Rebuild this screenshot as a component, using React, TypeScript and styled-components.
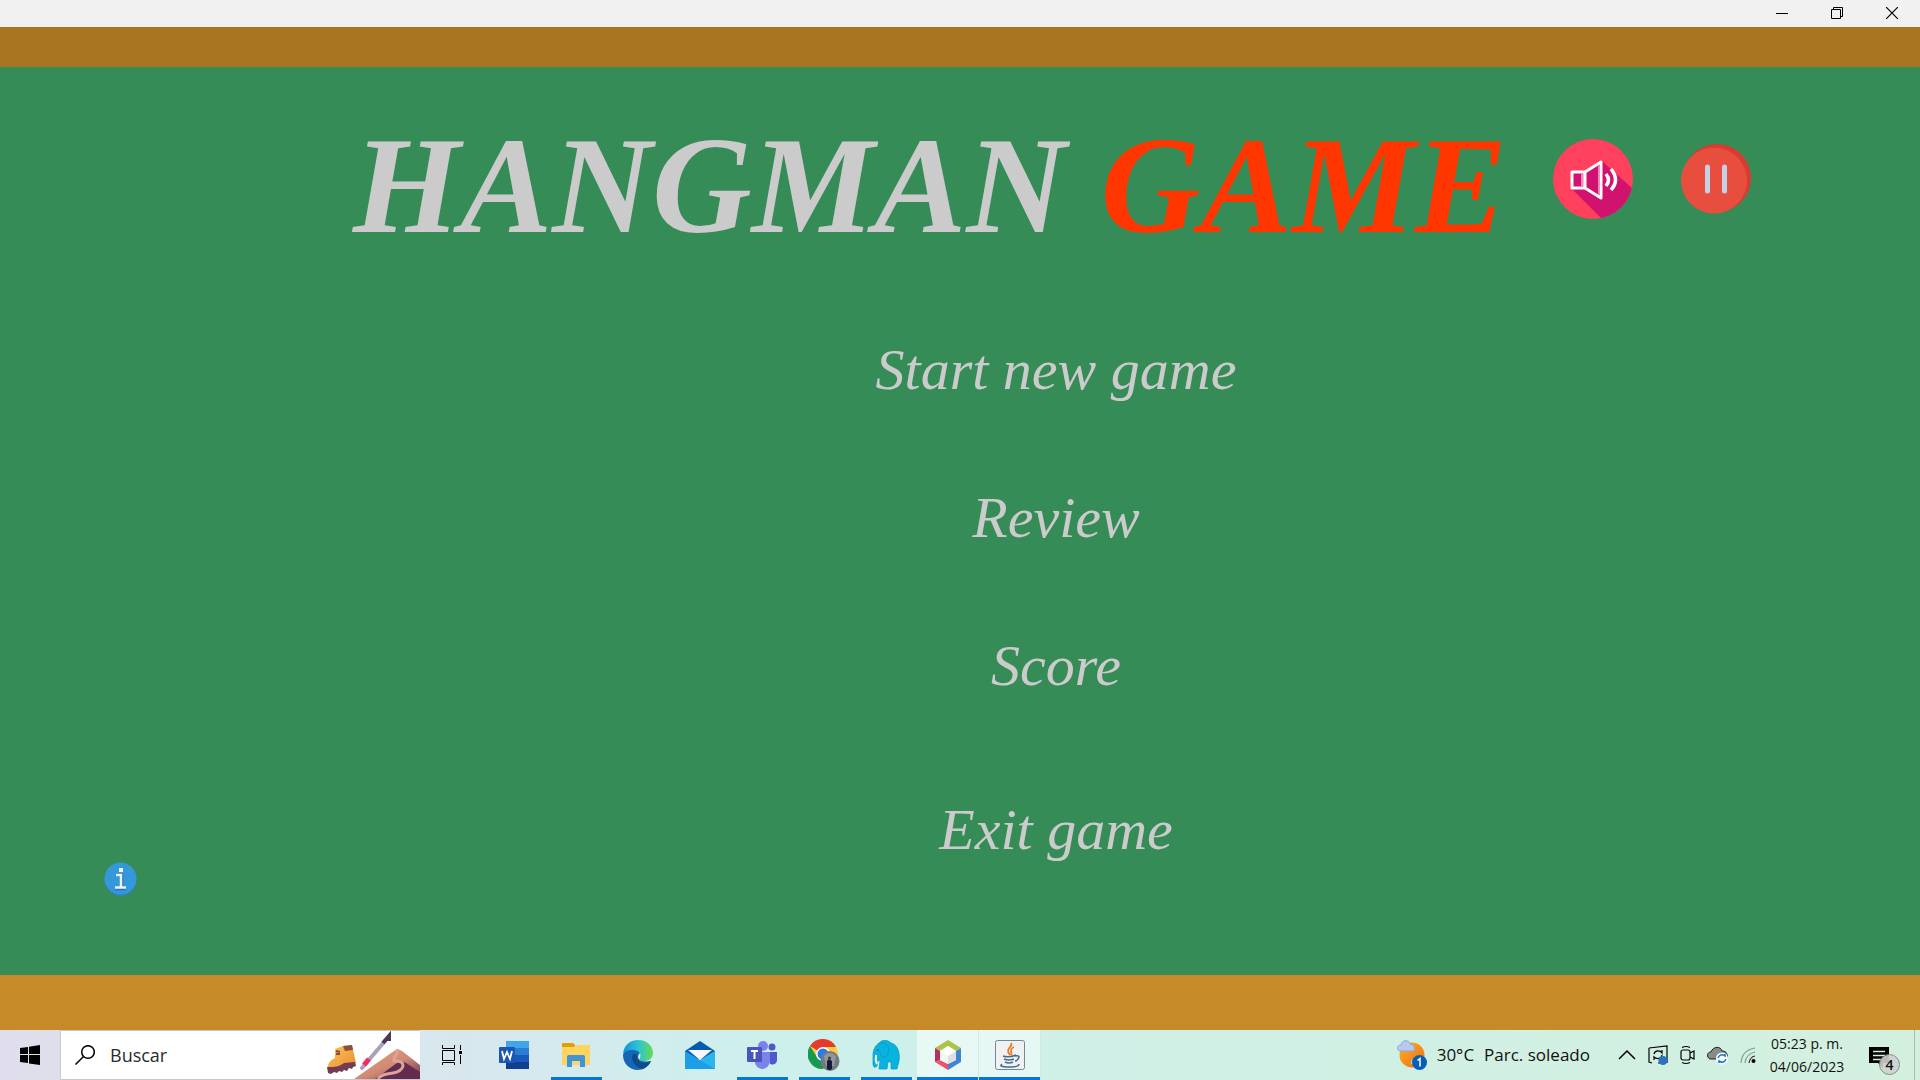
import React from "react";
import styled, { createGlobalStyle } from "styled-components";

const GlobalStyle = createGlobalStyle`
  * { box-sizing: border-box; }
  body { margin: 0; background: #368c57; }
  button { margin: 0; padding: 0; border: 0; background: none; color: inherit; font: inherit; cursor: pointer; }
  svg { display: block; flex: none; }
`;

const Screen = styled.div`
  min-height: 100vh;
  display: flex;
  flex-direction: column;
  font-family: "Open Sans", "Noto Sans", sans-serif;
  color: #111;
`;

const TitleBar = styled.header`
  height: 27px;
  display: flex;
  justify-content: flex-end;
  padding: 0 1px 1px 0;
  background: #f1f1f1;
`;

const WindowButton = styled.button`
  width: 55px;
  display: flex;
  align-items: center;
  justify-content: center;
`;

const Frame = styled.div<{ $tone: string; $height: number }>`
  height: ${(p) => p.$height}px;
  background: ${(p) => p.$tone};
`;

const Board = styled.main`
  flex: 1;
  display: flex;
  flex-direction: column;
  background: #368c57;
  color: #cbcbcb;
  font-family: "Liberation Serif", serif;
  font-style: italic;
`;

const Heading = styled.div`
  display: flex;
  justify-content: center;
  align-items: flex-start;
  padding: 44px 0 0 184px;
`;

const Title = styled.h1`
  margin: 0;
  font-size: 138px;
  line-height: 150px;
  font-weight: bold;
  white-space: nowrap;
`;

const Accent = styled.span`
  color: #ff3600;
`;

const Controls = styled.div`
  display: flex;
  align-items: center;
  gap: 48px;
  margin: 28px 0 0 46px;
`;

const RoundButton = styled.button`
  border-radius: 50%;
`;

const Menu = styled.nav`
  display: flex;
  flex-direction: column;
  align-items: center;
  gap: 84px;
  padding: 77px 0 0 192px;
`;

const MenuButton = styled.button`
  font-size: 58px;
  line-height: 64px;
  white-space: nowrap;
  &:last-child { margin-top: 16px; }
`;

const BoardFooter = styled.div`
  padding: 0 104px;
`;

const Taskbar = styled.footer`
  height: 50px;
  display: flex;
  background: linear-gradient(90deg, #e0deec 0%, #d8e7ee 24%, #cdf0ed 40%, #d0f0e6 60%, #d3f0df 100%);
`;

const StartButton = styled.button`
  width: 60px;
  display: grid;
  place-items: center;
`;

const SearchBox = styled.label`
  width: 360px;
  display: flex;
  align-items: center;
  padding-left: 14px;
  background: #fff;
  border: 1px solid #c8c8c8;
  border-right: 0;
`;

const SearchInput = styled.input`
  flex: 1;
  min-width: 0;
  margin-left: 15px;
  padding: 0;
  border: 0;
  outline: 0;
  background: none;
  font: 18px/24px "Open Sans", "Noto Sans", sans-serif;
  &::placeholder { color: #2b2b2b; opacity: 1; }
`;

const AppStrip = styled.div`
  display: flex;
  padding-left: 1px;
`;

const AppButton = styled.button<{ $running?: boolean; $open?: boolean }>`
  width: 62px;
  display: flex;
  flex-direction: column;
  align-items: center;
  justify-content: center;
  padding-top: 3px;
  background: ${(p) => (p.$open ? "rgba(255,255,255,.5)" : "none")};
  border-right: ${(p) => (p.$open ? "1px solid #cfe9e3" : "0")};
  &::after {
    content: "";
    width: ${(p) => (p.$open ? "100%" : "51px")};
    height: 3px;
    background: ${(p) => (p.$running || p.$open ? "#0078d7" : "transparent")};
  }
  svg { margin: auto; }
`;

const Tray = styled.div`
  display: flex;
  align-items: center;
  margin-left: auto;
`;

const Weather = styled.button`
  display: flex;
  align-items: center;
  gap: 10px;
  margin-right: 28px;
  font-size: 17px;
  line-height: 24px;
  white-space: nowrap;
`;

const TrayIcons = styled.div`
  display: flex;
  align-items: center;
  gap: 12px;
`;

const Clock = styled.time`
  width: 102px;
  text-align: center;
  font-size: 14px;
  line-height: 23px;
  white-space: nowrap;
`;

const Notifications = styled.button`
  width: 32px;
  height: 36px;
  margin: 4px 14px 0 10px;
  position: relative;
`;

const Count = styled.span`
  position: absolute;
  right: 0;
  bottom: 0;
  width: 21px;
  height: 21px;
  border: 1px solid #858c88;
  border-radius: 50%;
  background: rgba(205, 208, 206, 0.9);
  font-size: 14px;
  font-weight: 600;
  line-height: 19px;
`;

const ShowDesktop = styled.button`
  width: 6px;
  align-self: stretch;
  border-left: 1px solid #a9bdb4;
`;

const SoundIcon = () => (
  <svg width="80" height="80" viewBox="0 0 80 80">
    <defs><clipPath id="soundDisc"><circle cx="40" cy="40" r="40" /></clipPath></defs>
    <g clipPath="url(#soundDisc)">
      <path fill="#ff415d" d="M0 0h80v80H0z" />
      <path fill="#d1136f" d="M49 22 80 50v30H49L19 50l14-16z" />
    </g>
    <path d="M19 33h13v16H19z" fill="#d1136f" stroke="#fff" strokeWidth="3" strokeLinejoin="round" />
    <path d="M32 33 48 23v36L32 49z" fill="#d1136f" stroke="#fff" strokeWidth="3" strokeLinejoin="round" />
    <path d="M29 35v12M46 27v28" stroke="#f08bbd" strokeWidth="2" />
    <path d="M53 35q5 6 0 12M58 30q9 11 0 21" fill="none" stroke="#fff" strokeWidth="3.500" />
  </svg>
);

const PauseIcon = () => (
  <svg width="70" height="70" viewBox="0 0 70 70">
    <circle cx="36" cy="34" r="34" fill="#d93b31" />
    <circle cx="33" cy="36.500" r="33" fill="#e84e3e" />
    <path d="M26.500 23v24M43.500 23v24" stroke="#c2d2e4" strokeWidth="5" strokeLinecap="round" />
  </svg>
);

const InfoIcon = () => (
  <svg width="33" height="34" viewBox="0 0 33 34">
    <circle cx="16.500" cy="18" r="16" fill="#3182c0" />
    <circle cx="16.500" cy="16.500" r="16" fill="#3498db" />
    <path d="M12 13h6v13M11 27h11" fill="none" stroke="#2a79b5" strokeWidth="3" />
    <path d="M12 13h5v13M11 25.500h11" fill="none" stroke="#ecf3f7" strokeWidth="2.500" />
    <path d="M15 6h4v4h-4z" fill="#ecf3f7" />
  </svg>
);

const SearchArt = () => (
  <svg width="93" height="48" viewBox="0 0 93 48">
    <defs>
      <linearGradient id="hill" x1="0" x2="1" y1="0" y2="1"><stop stopColor="#f2a27c" /><stop offset=".55" stopColor="#ce8a75" /><stop offset="1" stopColor="#6a3451" /></linearGradient>
      <linearGradient id="boot" x1="0" x2="1" y1="0" y2="1"><stop stopColor="#ffc64e" /><stop offset="1" stopColor="#e88c3c" /></linearGradient>
    </defs>
    <path d="M8 18 16 15l9-1 4 18-20 5-8 1c-1-6 3-9 7-11z" fill="url(#boot)" />
    <path d="M16 15l9-1 1 5-8 1z" fill="#8a5038" />
    <path d="M0 36c8 0 12 0 17-4l11-1 1 4-3 1-1 2-3-1-2 3-3-1-2 2-3-1-2 2-3-1-3 2-3-1z" fill="#723c52" />
    <path d="M9 20l4 1M9 23h4" stroke="#8b4b3e" strokeWidth="2" />
    <path d="M35 37 58 10" stroke="#aaa2bb" strokeWidth="4" strokeLinecap="round" />
    <path d="m37 34 5-6" stroke="#f42e65" strokeWidth="5" />
    <path d="m56 12 6-7v5" fill="none" stroke="#4b3957" strokeWidth="4" />
    <path d="M27 48 67 20q4-3 8 0l18 14v14z" fill="url(#hill)" />
    <path d="m48 48 22-16q5-3 9 0l14 9v7z" fill="#632b50" />
    <path d="M70 18c2 8-4 5-3 12 14-1 10 11-1 12-8 1-13 2-15 6" fill="none" stroke="#dda496" strokeWidth="3" />
  </svg>
);

const WordIcon = () => (
  <svg width="30" height="28" viewBox="0 0 30 28">
    <path fill="#41a5ee" d="M7 0h23v7H7z" /><path fill="#2b7cd3" d="M7 7h23v7H7z" /><path fill="#185abd" d="M7 14h23v7H7z" /><path fill="#103f91" d="M7 21h23v7H7z" />
    <rect y="6" width="16" height="16" rx="1" fill="#1b57b0" />
    <path d="m3 10 2 8 3-7 3 7 2-8" fill="none" stroke="#fff" strokeWidth="1.800" />
  </svg>
);
const FolderIcon = () => (
  <svg width="28" height="24" viewBox="0 0 28 24">
    <path fill="#e0a000" d="M0 1q0-1 1-1h10l2 2v6H0z" /><path fill="#ffd45e" d="M0 4h12l2-2h13q1 0 1 1v19H0z" />
    <path fill="#3a96d8" d="M5 24V14q0-2 2-2h14q2 0 2 2v10h-5v-6h-8v6z" />
  </svg>
);
const EdgeIcon = () => (
  <svg width="30" height="30" viewBox="0 0 30 30">
    <defs><linearGradient id="edgeTop"><stop stopColor="#168ed6" /><stop offset=".5" stopColor="#2cc3d4" /><stop offset="1" stopColor="#68db52" /></linearGradient></defs>
    <path fill="#1268b5" d="M0 15c1-7 15-9 17-2-5 5 0 10 11 8-3 6-8 9-13 9C6 30 0 23 0 15z" />
    <path fill="url(#edgeTop)" d="M0 14C1 5 7 0 15 0c9 0 15 6 15 13 0 6-5 8-9 8-3 0-5-1-4-3 2-6-3-8-7-8-5 0-9 2-10 4z" />
    <path fill="#104a89" d="M10 14c-3 7 3 14 10 15 4-2 7-5 8-8-7 4-14 1-14-4 0-2-1-4-4-3z" />
  </svg>
);
const MailIcon = () => (
  <svg width="30" height="28" viewBox="0 0 30 28">
    <path fill="#075aac" d="M0 10 15 0l15 10v8H0z" />
    <path fill="#1d9fe8" d="m0 10 15 9 15-9v18H0z" /><path fill="#37c3ef" d="m15 19 15-9v18z" opacity=".6" /><path fill="#f8f8f8" d="M3 9h24L15 19z" />
  </svg>
);
const TeamsIcon = () => (
  <svg width="30" height="28" viewBox="0 0 30 28">
    <circle cx="16" cy="5" r="5" fill="#7b83eb" /><circle cx="25" cy="6" r="3.500" fill="#5059c9" />
    <path d="M21 11h9v9q-2 5-7 3z" fill="#5059c9" /><path d="M8 11h15v10q-2 7-8 7-6-1-7-6z" fill="#7b83eb" />
    <rect y="6" width="15" height="15" rx="1" fill="#4b53bc" /><path d="M4 10h7M7.500 10v8" stroke="#fff" strokeWidth="2" />
  </svg>
);
const ChromeIcon = () => (
  <svg width="32" height="32" viewBox="0 0 32 32">
    <circle cx="15" cy="15" r="15" fill="#ffcd40" /><path d="M15 15 2 7a15 15 0 0 1 26 1H15z" fill="#e33b2e" />
    <path d="M2 7a15 15 0 0 0 13 23l6-11-6-4-6 3z" fill="#159a50" /><circle cx="15" cy="15" r="7" fill="#fff" /><circle cx="15" cy="15" r="5.500" fill="#297bea" />
    <ellipse cx="22" cy="22" rx="9.500" ry="10" fill="#737a80" /><path d="M16 17q5-6 12 0l-2 10h-8z" fill="#92969d" />
    <path d="M19 30v-8l2-2 3 2v8q-3 2-5 0z" fill="#171a39" /><circle cx="21.500" cy="19" r="1.500" fill="#413638" />
  </svg>
);
const ElephantIcon = () => (
  <svg width="28" height="30" viewBox="0 0 28 30">
    <path d="M7 3c4-4 9-3 12 0 8 2 9 12 8 18l-2 8h-6v-7h-3l-1 7H7l1-8-2-1-1 6q-3 3-4-1V15C1 9 4 5 7 3z" fill="#08b4df" stroke="#0898be" strokeWidth=".7" />
    <path d="M9 3c8-1 10 8 5 14-5 1-6-3-6-6" fill="none" stroke="#0794bb" strokeWidth=".7" />
    <path d="M4 15q-1 5 1 9" fill="none" stroke="#fff" strokeWidth="2" /><circle cx="6" cy="10" r="1" fill="#075b77" />
  </svg>
);
const NetBeansIcon = () => (
  <svg width="26" height="30" viewBox="0 0 26 30">
    <path fill="#adc348" d="m13 0 13 8-5 3-8-5-8 5-5-3z" /><path fill="#b5315b" d="m0 8 5 3v9l-5 2z" /><path fill="#ef5368" d="m0 22 5-2 8 4v6z" />
    <path fill="#4482d2" d="M26 8v14l-13 8v-6l8-4v-9z" /><path fill="#fff" d="m13 6 8 5-8 5-8-5z" /><path fill="#f5f5f5" d="m5 11 8 5v8l-8-4z" /><path fill="#dedfe4" d="m21 11-8 5v8l8-4z" />
  </svg>
);
const JavaIcon = () => (
  <svg width="30" height="30" viewBox="0 0 30 30">
    <rect x=".5" y=".5" width="29" height="29" rx="2" fill="#f0f1f2" stroke="#728695" />
    <g fill="none"><path d="M16 3c3 4-7 5-1 12M19 7c-6 3-1 5-3 8" stroke="#ee7824" strokeWidth="1.800" />
      <path d="M8 16q6 2 13-1M9 19q5 2 10 0M10 22q4 2 8 0M7 24q-4 3 7 3 10 0 10-3M20 16q6-1 3 3-1 2-3 2" stroke="#456c8a" strokeWidth="1.500" /></g>
  </svg>
);

const apps = [
  { name: "Word", icon: <WordIcon /> },
  { name: "File Explorer", icon: <FolderIcon />, running: true },
  { name: "Edge", icon: <EdgeIcon /> },
  { name: "Mail", icon: <MailIcon /> },
  { name: "Teams", icon: <TeamsIcon />, running: true },
  { name: "Chrome", icon: <ChromeIcon />, running: true },
  { name: "Elephant", icon: <ElephantIcon />, running: true },
  { name: "NetBeans", icon: <NetBeansIcon />, open: true },
  { name: "Java", icon: <JavaIcon />, open: true },
];

const menuItems = ["Start new game", "Review", "Score", "Exit game"];

export default function App() {
  return (
    <Screen>
      <GlobalStyle />
      <TitleBar>
        <WindowButton aria-label="Minimize"><svg width="12" height="12"><path d="M0 6.500h12" stroke="#000" /></svg></WindowButton>
        <WindowButton aria-label="Restore"><svg width="12" height="12" fill="none" stroke="#000"><path d="M.5 2.500h9v9h-9zM2.500 2.500v-2h9v9h-2" /></svg></WindowButton>
        <WindowButton aria-label="Close"><svg width="12" height="12"><path d="m0 0 12 12M12 0 0 12" stroke="#000" strokeWidth="1.200" /></svg></WindowButton>
      </TitleBar>
      <Frame $tone="#a87520" $height={40} />
      <Board>
        <Heading>
          <Title>HANGMAN <Accent>GAME</Accent></Title>
          <Controls>
            <RoundButton aria-label="Sound"><SoundIcon /></RoundButton>
            <RoundButton aria-label="Pause"><PauseIcon /></RoundButton>
          </Controls>
        </Heading>
        <Menu>
          {menuItems.map((item) => <MenuButton key={item}>{item}</MenuButton>)}
        </Menu>
        <BoardFooter>
          <RoundButton aria-label="Information"><InfoIcon /></RoundButton>
        </BoardFooter>
      </Board>
      <Frame $tone="#c68a29" $height={55} />
      <Taskbar>
        <StartButton aria-label="Start">
          <svg width="20" height="20"><path d="m0 3 8-1v7H0zM9 1.800 20 0v9H9zM0 10h8v8l-8-1zM9 10h11v10L9 18.500z" /></svg>
        </StartButton>
        <SearchBox>
          <svg width="20" height="20" fill="none" stroke="#000" strokeWidth="1.500"><circle cx="13" cy="7" r="6.300" /><path d="m8.500 11.500-8 8" /></svg>
          <SearchInput aria-label="Buscar" placeholder="Buscar" />
          <SearchArt />
        </SearchBox>
        <AppStrip>
          <AppButton aria-label="Task view">
            <svg width="20" height="20" fill="none" stroke="#000"><path d="M.5 0v3.500h12V0M.5 5.500h12v10H.5zM.5 20v-2.500h12V20M18.500 0v5M18.500 10v9" /><path d="M17 6h3v3h-3z" fill="#000" stroke="none" /></svg>
          </AppButton>
          {apps.map((app) => (
            <AppButton key={app.name} aria-label={app.name} $running={app.running} $open={app.open}>{app.icon}</AppButton>
          ))}
        </AppStrip>
        <Tray>
          <Weather>
            <svg width="30" height="30">
              <defs><linearGradient id="sun" x1="0" x2="1" y1="0" y2="1"><stop stopColor="#ffb21f" /><stop offset="1" stopColor="#ed6b19" /></linearGradient></defs>
              <circle cx="15" cy="15" r="12.500" fill="url(#sun)" />
              <path d="M3 11C-1 10 0 5 4 5 5-1 13 0 13 4q6 1 4 7z" fill="#b7c9f0" stroke="#8ca5da" />
              <path d="M14 24q-1-5 5-6l2-3 7 2v8z" fill="#bbceef" /><circle cx="22.500" cy="22.500" r="7.500" fill="#075eb5" />
              <path d="m20.500 20.500 2.500-2v8" fill="none" stroke="#fff" strokeWidth="1.500" />
            </svg>
            <span>30°C</span><span>Parc. soleado</span>
          </Weather>
          <TrayIcons>
            <svg width="18" height="20" fill="none" stroke="#000" strokeWidth="1.500"><path d="m1 14 8-8 8 8" /></svg>
            <svg width="20" height="20" fill="none" stroke="#000" strokeWidth="1.200"><path d="m1 3 18-2v17M1 3v14l3 1M10 18h3M6 9c1-4 6-4 8-1V5M14 10c-1 5-6 4-8 2v3" /><circle cx="15" cy="15.500" r="4.500" fill="#2974c2" stroke="none" /></svg>
            <svg width="15" height="20" fill="none" stroke="#000" strokeWidth="1.200"><path d="M2 2.500q4-2 8 0M2 17.500q4 2 8 0M10 8l4-2v8l-4-2" /><rect x="1" y="5" width="9" height="10" rx="2" /></svg>
            <svg width="21" height="20"><path d="M3 14C-1 12 0 7 4 7 6 1 14 1 15 6c5 0 6 4 5 8z" fill="#898c8b" stroke="#222" /><circle cx="15" cy="13.500" r="6" fill="#fff" /><path d="M11 13q2-5 7-2V9M19 14q-2 5-7 2v2" fill="none" stroke="#1377cf" strokeWidth="1.500" /></svg>
            <svg width="16" height="20" fill="none" stroke="#8b9b93" strokeWidth="1.200"><path d="M1 18Q2 5 15 3M5 18Q6 9 15 7" /><path d="M9 18q1-6 6-7" stroke="#333" /><circle cx="13.500" cy="16" r="2" fill="#000" stroke="none" /></svg>
          </TrayIcons>
          <Clock dateTime="2023-06-04T17:23">05:23 p. m.<br />04/06/2023</Clock>
          <Notifications aria-label="Notifications, 4 new">
            <svg width="22" height="30"><path d="M1 5h20v16h-6v5l-5-5H1z" /><path d="M5 9.500h12M5 13.500h12M5 17.500h8" stroke="#d3f0df" strokeWidth="1.500" /></svg>
            <Count>4</Count>
          </Notifications>
          <ShowDesktop aria-label="Show desktop" />
        </Tray>
      </Taskbar>
    </Screen>
  );
}
